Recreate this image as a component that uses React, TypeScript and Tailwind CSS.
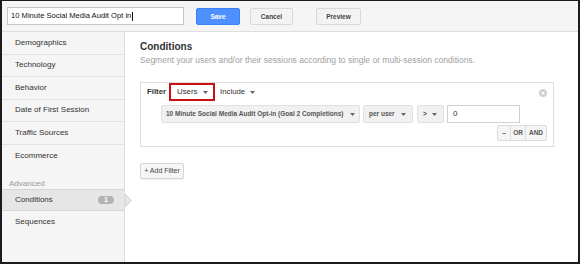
const font = { fontFamily: '"Liberation Sans", Arial, sans-serif' };

function Caret({ className = "" }: { className?: string }) {
  return (
    <svg width="5" height="3" viewBox="0 0 5 3" className={className}>
      <path d="M0 0h5L2.5 3z" fill="#666" />
    </svg>
  );
}

const sideItems = [
  "Demographics",
  "Technology",
  "Behavior",
  "Date of First Session",
  "Traffic Sources",
];

export default function App() {
  return (
    <div
      style={font}
      className="w-[580px] h-[264px] flex flex-col border-t border-l-2 border-r-2 border-b-2 border-[#1c1c1c] bg-white overflow-hidden"
    >
      {/* top bar */}
      <div className="h-[31px] shrink-0 flex items-start pt-[6px] pl-[5px] bg-[#f5f5f5] border-b border-[#dedede]">
        <div className="w-[177px] h-[18px] bg-white border border-[#c6c6c6] flex items-center pl-[3px] text-[#111]">
          <span className="text-[7.6px]">10 Minute Social Media Audit Opt in</span>
          <span className="ml-px w-px h-[9px] bg-[#111]" />
        </div>
        <button className="ml-[12px] w-[44px] h-[17px] mt-[1px] rounded-[2px] bg-[#4d90fe] border border-[#3e82f7] text-white text-[6.5px] font-bold">
          Save
        </button>
        <button className="ml-[10px] w-[43px] h-[17px] mt-[1px] rounded-[2px] bg-[#f3f3f3] border border-[#d9d9d9] text-[#444] text-[6.5px] font-bold">
          Cancel
        </button>
        <button className="ml-[23px] w-[45px] h-[17px] mt-[1px] rounded-[2px] bg-[#f3f3f3] border border-[#d9d9d9] text-[#444] text-[6.5px] font-bold">
          Preview
        </button>
      </div>

      <div className="flex flex-1 min-h-0">
        {/* sidebar */}
        <div className="w-[123px] shrink-0 bg-[#f5f5f5] border-r border-[#dcdcdc] flex flex-col text-[8px] text-[#333]">
          {sideItems.map((s) => (
            <div
              key={s}
              className="h-[22.5px] shrink-0 flex items-center pl-[13px] border-b border-[#e2e2e2]"
            >
              {s}
            </div>
          ))}
          <div className="h-[22px] shrink-0 flex items-center pl-[13px]">Ecommerce</div>
          <div className="pt-[12px] pl-[7px] leading-[10px] text-[#999]">Advanced</div>
          <div className="relative h-[22px] shrink-0 flex items-center pl-[13px] bg-[#e6e6e6] border-y border-[#d6d6d6]">
            Conditions
            <span className="absolute left-[96px] top-[6px] w-[16px] h-[8px] rounded-full bg-[#b3b3b3] text-white text-[7px] font-bold leading-[8px] text-center">
              1
            </span>
            <svg
              width="7"
              height="13"
              viewBox="0 0 7 13"
              className="absolute right-[-8px] top-[4px]"
            >
              <path d="M0 0L6.5 6.5L0 13z" fill="#e6e6e6" stroke="#cfcfcf" strokeWidth="1" />
            </svg>
          </div>
          <div className="h-[22px] shrink-0 flex items-center pl-[13px]">Sequences</div>
        </div>

        {/* main */}
        <div className="flex-1 pl-[15px] pt-[9px]">
          <div className="text-[10px] leading-[12px] font-bold text-[#333]">Conditions</div>
          <div className="mt-[2px] text-[8.5px] leading-[10px] text-[#a0a0a0]">
            Segment your users and/or their sessions according to single or multi-session conditions.
          </div>

          <div className="relative mt-[17px] w-[414px] border border-[#dedede] pb-[5px]">
            <svg
              width="8"
              height="8"
              viewBox="0 0 8 8"
              className="absolute right-[6px] top-[6px]"
            >
              <circle cx="4" cy="4" r="4" fill="#d0d0d0" />
              <path d="M2.5 2.5L5.5 5.5M5.5 2.5L2.5 5.5" stroke="#fff" strokeWidth="1" />
            </svg>
            <div className="flex items-center h-[18px] text-[7.8px] text-[#333]">
              <span className="ml-[6px] font-bold">Filter</span>
              <div className="ml-[3px] w-[46px] h-[18px] border-2 border-[#cc1111] flex items-center pl-[6px]">
                Users
                <Caret className="ml-[6px]" />
              </div>
              <span className="ml-[5px]">Include</span>
              <Caret className="ml-[5px]" />
            </div>

            <div className="flex items-center mt-[4px] pl-[20px] h-[18px] text-[6.5px] font-bold text-[#555]">
              <div className="w-[199px] h-[18px] bg-[#f1f1f1] border border-[#e0e0e0] rounded-[2px] flex items-center pl-[4px]">
                10 Minute Social Media Audit Opt-in (Goal 2 Completions)
                <Caret className="ml-auto mr-[4px]" />
              </div>
              <div className="ml-[3px] w-[50px] h-[18px] bg-[#f1f1f1] border border-[#e0e0e0] rounded-[2px] flex items-center pl-[5px]">
                per user
                <Caret className="ml-auto mr-[6px]" />
              </div>
              <div className="ml-[4px] w-[27px] h-[18px] bg-[#f1f1f1] border border-[#e0e0e0] rounded-[2px] flex items-center pl-[5px]">
                &gt;
                <Caret className="ml-auto mr-[6px]" />
              </div>
              <div className="ml-[3px] w-[73px] h-[18px] bg-white border border-[#d0d0d0] flex items-center pl-[5px] text-[8px] font-normal text-[#333]">
                0
              </div>
            </div>

            <div className="flex justify-end mt-[2px] pr-[6px]">
              <div className="flex h-[16px] border border-[#dcdcdc] rounded-[2px] bg-[#f5f5f5] text-[6.5px] font-bold text-[#555]">
                <span className="w-[13px] flex items-center justify-center border-r border-[#dcdcdc]">
                  –
                </span>
                <span className="w-[15px] flex items-center justify-center border-r border-[#dcdcdc]">
                  OR
                </span>
                <span className="w-[20px] flex items-center justify-center">AND</span>
              </div>
            </div>
          </div>

          <button className="mt-[16px] h-[16px] w-[44px] rounded-[2px] bg-[#f6f6f6] border border-[#d6d6d6] shadow-[0_1px_1px_rgba(0,0,0,0.06)] text-[7px] text-[#444]">
            + Add Filter
          </button>
        </div>
      </div>
    </div>
  );
}
